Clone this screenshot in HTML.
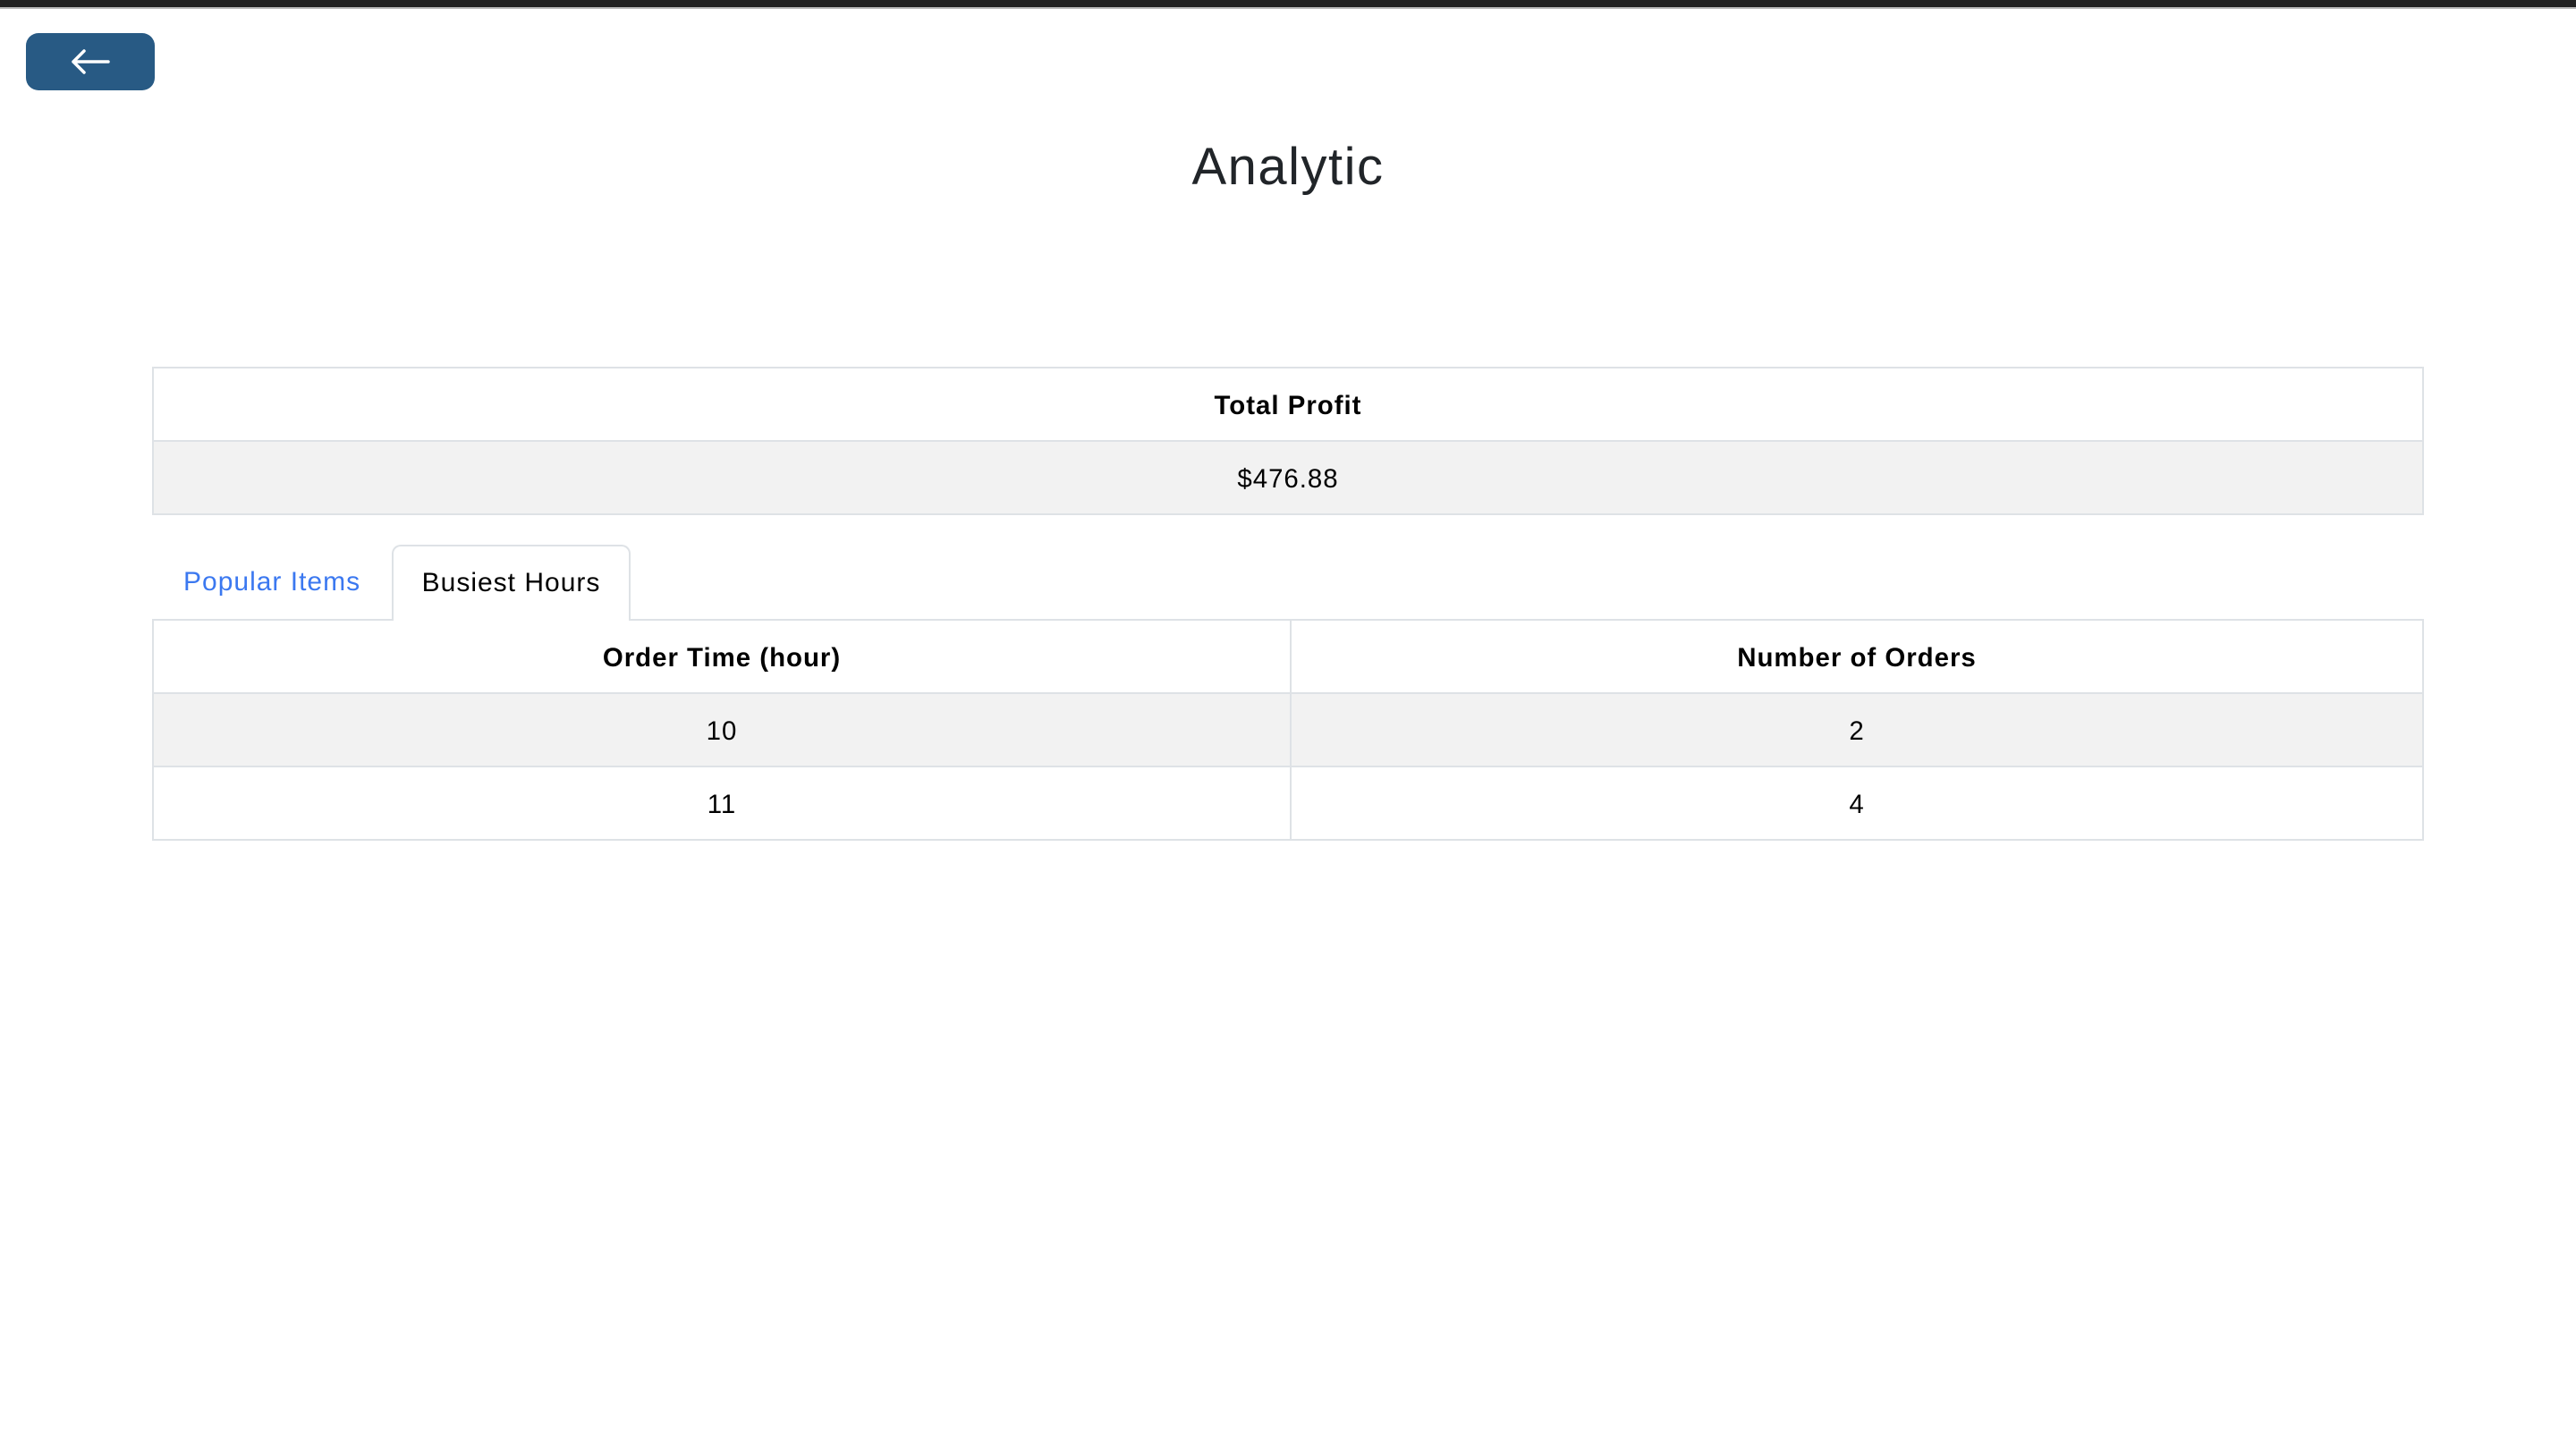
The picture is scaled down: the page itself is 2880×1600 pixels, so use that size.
<!DOCTYPE html>
<html><head><meta charset="utf-8"><style>
*{box-sizing:border-box;margin:0;padding:0}
html,body{width:2880px;height:1600px;background:#fff;overflow:hidden;font-family:"Liberation Sans",Arial,sans-serif;color:#000;letter-spacing:1px}
.topbar{position:absolute;left:0;top:0;width:2880px;height:8px;background:#222}
.topline{position:absolute;left:0;top:8px;width:2880px;height:2px;background:#bbb}
.btn{position:absolute;left:29px;top:37px;width:144px;height:64px;background:#285a84;border-radius:14px}
.btn svg{position:absolute;left:50px;top:18px}
h1{position:absolute;left:0;width:2880px;top:152px;text-align:center;font-weight:400;font-size:58px;color:#212529;line-height:1.2;letter-spacing:1.5px}
table{position:absolute;left:170px;width:2540px;border-collapse:collapse;font-size:29.4px}
td,th{border:2px solid #dee2e6;height:82px;text-align:center;vertical-align:middle;padding:4px 0 0 0}
th{font-weight:700}
tr.s td{background:#f2f2f2}
.tab1{position:absolute;left:205px;top:634px;font-size:30px;color:#3b78f0}
.tab2{position:absolute;left:438px;top:609px;width:267px;height:85px;border:2px solid #dee2e6;border-bottom:none;border-radius:10px 10px 0 0;background:#fff;font-size:30px;text-align:center;padding-top:24px;z-index:2}
</style></head><body>
<div class="topbar"></div><div class="topline"></div>
<div class="btn"><svg width="44" height="28" viewBox="0 0 44 28"><path d="M3 14H42M15 2L3 14L15 26" fill="none" stroke="#fff" stroke-width="3.5" stroke-linecap="round" stroke-linejoin="round"/></svg></div>
<h1>Analytic</h1>
<table style="top:410px"><tr><th>Total Profit</th></tr><tr class="s"><td>$476.88</td></tr></table>
<div class="tab1">Popular Items</div>
<div class="tab2">Busiest Hours</div>
<table style="top:692px"><tr><th style="width:1272px">Order Time (hour)</th><th>Number of Orders</th></tr>
<tr class="s"><td>10</td><td>2</td></tr><tr><td>11</td><td>4</td></tr></table>
</body></html>
